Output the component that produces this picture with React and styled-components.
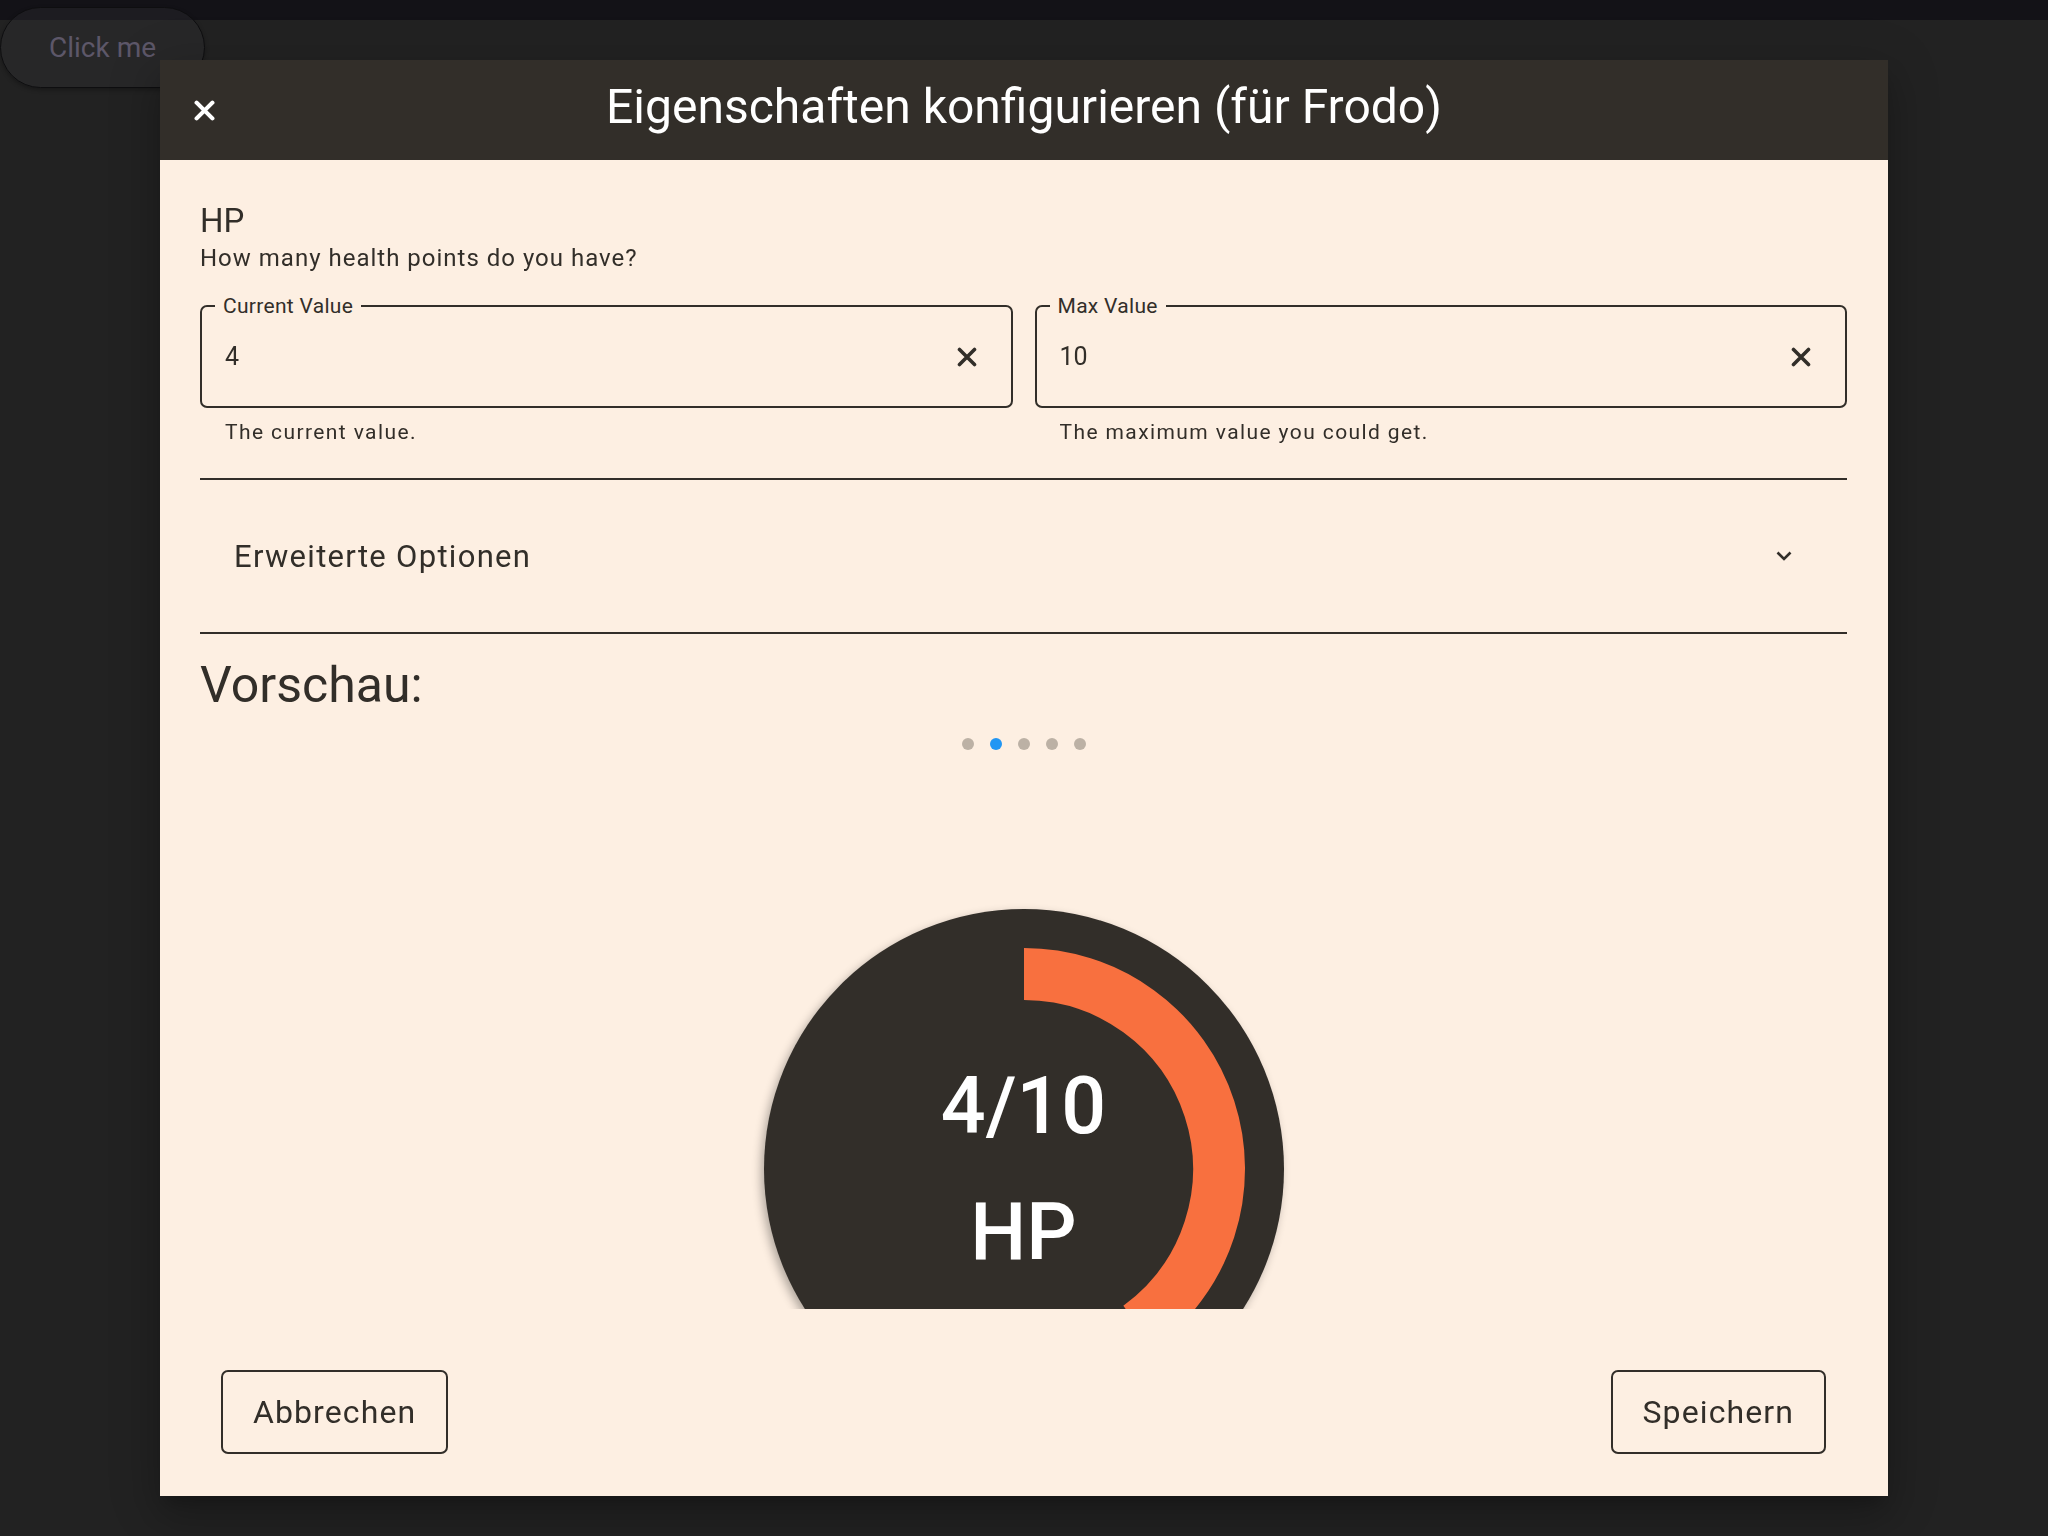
import React from "react";
import styled, { createGlobalStyle } from "styled-components";

const INK = "#322e29";
const PAPER = "#fdefe2";
const ORANGE = "#f8703f";

const Global = createGlobalStyle`
  html, body { margin: 0; padding: 0; }
  body {
    background: linear-gradient(#131217 0 20px, #222222 20px) no-repeat, #222222;
    min-height: 1536px;
    font-family: Roboto, "Liberation Sans", Arial, sans-serif;
  }
  * { box-sizing: border-box; }
`;

const Page = styled.div`
  min-height: 1536px;
  padding-top: 7px;
`;

const GhostButton = styled.button`
  height: 81px;
  width: 205px;
  padding: 0 0 0 48px;
  text-align: left;
  border-radius: 41px;
  border: 1px solid #0e0e10;
  background: rgba(48, 48, 52, 0.35);
  color: #5d5769;
  font-family: Roboto, sans-serif;
  font-size: 28px;
  box-shadow: 0 2px 4px rgba(0, 0, 0, 0.3);
`;

const Dialog = styled.section`
  position: fixed;
  top: 60px;
  left: 160px;
  width: 1728px;
  background: ${PAPER};
  color: ${INK};
  display: flex;
  flex-direction: column;
  box-shadow: 0 11px 15px -7px rgba(0,0,0,.2), 0 24px 38px 3px rgba(0,0,0,.14), 0 9px 46px 8px rgba(0,0,0,.12);
`;

const Header = styled.header`
  height: 100px;
  background: ${INK};
  display: grid;
  grid-template-columns: 88px 1fr 88px;
  align-items: center;
`;

const HeaderClose = styled.button`
  border: 0;
  background: none;
  padding: 0;
  width: 88px;
  height: 100px;
  display: flex;
  align-items: center;
  justify-content: center;
  color: #fff;
`;

const Title = styled.h1`
  margin: 0;
  text-align: center;
  color: #fff;
  font-size: 48px;
  font-weight: 400;
  line-height: 1;
  padding-bottom: 6px;
`;

const Body = styled.div`
  padding: 42px 41px 0 40px;
  display: flex;
  flex-direction: column;
`;

const FieldTitle = styled.h2`
  margin: 0;
  font-size: 33px;
  font-weight: 400;
  line-height: 38px;
`;

const FieldSubtitle = styled.p`
  margin: 0;
  font-size: 24px;
  line-height: 36px;
  letter-spacing: 1px;
`;

const FieldRow = styled.div`
  margin-top: 29px;
  display: grid;
  grid-template-columns: 1fr 1fr;
  column-gap: 22px;
`;

const FieldCol = styled.div`
  display: flex;
  flex-direction: column;
`;

const Outline = styled.div`
  position: relative;
  height: 103px;
  border: 2px solid ${INK};
  border-radius: 7px;
  display: flex;
  align-items: center;
  padding: 0 34px 0 23px;
`;

const FloatingLabel = styled.label`
  position: absolute;
  top: -13px;
  left: 13px;
  padding: 0 8px;
  background: ${PAPER};
  font-size: 21px;
  line-height: 24px;
  letter-spacing: 0.3px;
`;

const ValueInput = styled.input`
  flex: 1;
  border: 0;
  outline: none;
  background: transparent;
  color: ${INK};
  font-family: Roboto, sans-serif;
  font-size: 25px;
  padding: 0;
`;

const ClearButton = styled.button`
  border: 0;
  background: none;
  padding: 0;
  width: 20px;
  height: 20px;
  display: flex;
  color: ${INK};
`;

const Helper = styled.p`
  margin: 9px 0 0 25px;
  font-size: 21px;
  line-height: 31px;
  letter-spacing: 1.4px;
`;

const AccordionBox = styled.div`
  margin-top: 30px;
  border-top: 2px solid ${INK};
  border-bottom: 2px solid ${INK};
`;

const AccordionSummary = styled.div`
  height: 152px;
  display: flex;
  align-items: center;
  justify-content: space-between;
  padding: 0 55px 0 34px;
  font-size: 31px;
  letter-spacing: 1.3px;
`;

const SectionHeading = styled.h3`
  margin: 22px 0 0;
  font-size: 50px;
  font-weight: 400;
  line-height: 58px;
`;

const Dots = styled.div`
  margin-top: 24px;
  display: flex;
  justify-content: center;
  gap: 16px;
`;

const Dot = styled.span`
  width: 12px;
  height: 12px;
  border-radius: 50%;
  background: ${(p) => (p.$active ? "#2196f3" : "#bcb1a5")};
`;

const Viewport = styled.div`
  height: 559px;
  overflow: hidden;
  display: flex;
  justify-content: center;
  padding-top: 159px;
`;

const Gauge = styled.div`
  position: relative;
  flex: none;
  width: 520px;
  height: 520px;
  border-radius: 50%;
  background: ${INK};
  box-shadow: -3px 4px 10px rgba(0, 0, 0, 0.3);
  display: flex;
  flex-direction: column;
  align-items: center;
  justify-content: center;
  gap: 30px;
  color: #fff;
`;

const GaugeRing = styled.svg`
  position: absolute;
  inset: 0;
`;

const GaugeText = styled.span`
  position: relative;
  font-size: 79px;
  line-height: 96px;
  font-weight: 500;
`;

const Footer = styled.footer`
  display: flex;
  justify-content: space-between;
  padding: 61px 62px 42px 61px;
`;

const ActionButton = styled.button`
  height: 84px;
  padding: 0 30px;
  border: 2px solid ${INK};
  border-radius: 7px;
  background: transparent;
  color: ${INK};
  font-family: Roboto, sans-serif;
  font-size: 32px;
  letter-spacing: 1.1px;
`;

const XIcon = ({ size = 20, stroke = 4 }) => (
  <svg width={size} height={size} viewBox="0 0 20 20" fill="none">
    <path d="M2.5 2.5 L17.5 17.5 M17.5 2.5 L2.5 17.5" stroke="currentColor" strokeWidth={stroke} strokeLinecap="round" />
  </svg>
);

const Field = ({ label, value, helper }) => (
  <FieldCol>
    <Outline>
      <FloatingLabel>{label}</FloatingLabel>
      <ValueInput readOnly defaultValue={value} />
      <ClearButton aria-label="clear">
        <XIcon size={20} stroke={3.6} />
      </ClearButton>
    </Outline>
    <Helper>{helper}</Helper>
  </FieldCol>
);

const frac = 4 / 10;
const r = 195;
const a = frac * 2 * Math.PI;
const ex = 260 + r * Math.sin(a);
const ey = 260 - r * Math.cos(a);

export default function App() {
  return (
    <>
      <Global />
      <Page>
        <GhostButton>Click me</GhostButton>
      </Page>
      <Dialog>
        <Header>
          <HeaderClose aria-label="close">
            <XIcon size={21} stroke={4} />
          </HeaderClose>
          <Title>Eigenschaften konfigurieren (für Frodo)</Title>
          <span />
        </Header>
        <Body>
          <FieldTitle>HP</FieldTitle>
          <FieldSubtitle>How many health points do you have?</FieldSubtitle>
          <FieldRow>
            <Field label="Current Value" value="4" helper="The current value." />
            <Field label="Max Value" value="10" helper="The maximum value you could get." />
          </FieldRow>
          <AccordionBox>
            <AccordionSummary>
              <span>Erweiterte Optionen</span>
              <svg width="16" height="10" viewBox="0 0 16 10" fill="none">
                <path d="M1.5 1.5 L8 8 L14.5 1.5" stroke={INK} strokeWidth="2.6" />
              </svg>
            </AccordionSummary>
          </AccordionBox>
          <SectionHeading>Vorschau:</SectionHeading>
          <Dots>
            {[0, 1, 2, 3, 4].map((i) => (
              <Dot key={i} $active={i === 1} />
            ))}
          </Dots>
          <Viewport>
            <Gauge>
              <GaugeRing width="520" height="520" viewBox="0 0 520 520">
                <path
                  d={`M 260 ${260 - r} A ${r} ${r} 0 0 1 ${ex} ${ey}`}
                  stroke={ORANGE}
                  strokeWidth="52"
                  fill="none"
                />
              </GaugeRing>
              <GaugeText>4/10</GaugeText>
              <GaugeText>HP</GaugeText>
            </Gauge>
          </Viewport>
        </Body>
        <Footer>
          <ActionButton>Abbrechen</ActionButton>
          <ActionButton>Speichern</ActionButton>
        </Footer>
      </Dialog>
    </>
  );
}
